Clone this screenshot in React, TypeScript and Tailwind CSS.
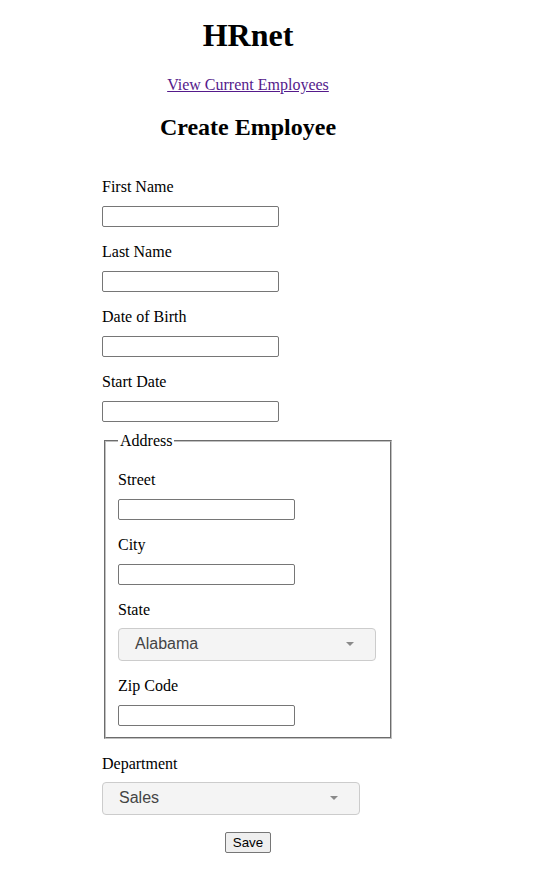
import { useState } from 'react'

const fields = ['First Name', 'Last Name', 'Date of Birth', 'Start Date']
const addressFields = ['Street', 'City']

function Field({ label }: { label: string }) {
  const [value, setValue] = useState('')
  return (
    <>
      <label className="block mt-4 mb-[10px] leading-[18px]">{label}</label>
      <input
        type="text"
        value={value}
        onChange={(e) => setValue(e.target.value)}
        className="block w-[177px] h-[21px] border border-[#767676] rounded-[2px] bg-white px-[2px] text-[13.33px] font-['Liberation_Sans',Arial,sans-serif]"
      />
    </>
  )
}

function Dropdown({ label, value }: { label: string; value: string }) {
  return (
    <>
      <label className="block mt-4 mb-[9px] leading-[18px]">{label}</label>
      <div className="flex items-center justify-between w-[258px] h-[33px] pl-[16px] pr-[21px] border border-[#cccccc] rounded-[4px] bg-[#f4f4f4] font-['Liberation_Sans',Arial,sans-serif] text-[16px] text-[#444444] cursor-pointer">
        <span>{value}</span>
        <svg width="8" height="4" viewBox="0 0 8 4">
          <path d="M0 0 L8 0 L4 4 Z" fill="#8a8a8a" />
        </svg>
      </div>
    </>
  )
}

export default function App() {
  return (
    <div className="w-[496px] min-h-[893px] bg-white text-black font-['Liberation_Serif','Times_New_Roman',serif] text-[16px]">
      <div className="text-center pt-[17px]">
        <h1 className="text-[32px] font-bold leading-[36.8px] mb-[21px]">HRnet</h1>
      </div>
      <div className="flex flex-col items-center">
        <a href="#" className="underline text-[#551a8b] leading-[18.4px] mt-[1px]">
          View Current Employees
        </a>
        <h2 className="text-[24px] font-bold leading-[27.6px] mt-[20px] mb-[20px]">Create Employee</h2>
        <form className="w-[292px]" onSubmit={(e) => e.preventDefault()}>
          {fields.map((f) => (
            <Field key={f} label={f} />
          ))}
          <fieldset className="mt-[10px] mx-[2px] w-[288px] border-2 [border-style:groove] border-[#c0c0c0] px-[12px] pt-[5px] pb-[11px]">
            <legend className="px-[2px] leading-[18px]">Address</legend>
            {addressFields.map((f) => (
              <Field key={f} label={f} />
            ))}
            <Dropdown label="State" value="Alabama" />
            <Field label="Zip Code" />
          </fieldset>
          <Dropdown label="Department" value="Sales" />
        </form>
        <button className="mt-[17px] h-[21px] px-[7px] border border-[#767676] rounded-[2px] bg-[#efefef] font-['Liberation_Sans',Arial,sans-serif] text-[13.33px] leading-none">
          Save
        </button>
      </div>
    </div>
  )
}
